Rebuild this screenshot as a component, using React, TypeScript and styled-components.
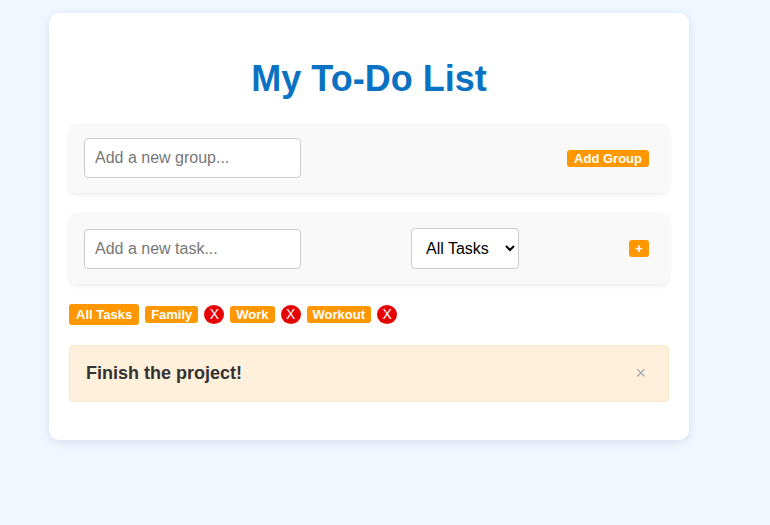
import React, { useState } from 'react';
import styled, { createGlobalStyle } from 'styled-components';

const GlobalStyle = createGlobalStyle`
  body {
    margin: 0;
    background: #f0f7ff;
    font-family: 'Liberation Sans', Arial, sans-serif;
  }
`;

type Task = { id: number; text: string; group: string };

const App = () => {
  const [groups, setGroups] = useState<string[]>(['Family', 'Work', 'Workout']);
  const [tasks, setTasks] = useState<Task[]>([{ id: 1, text: 'Finish the project!', group: 'All Tasks' }]);
  const [filter, setFilter] = useState('All Tasks');

  return (
    <Page>
      <GlobalStyle />
      <Card>
        <Title>My To-Do List</Title>

        <Panel>
          <TextInput placeholder='Add a new group...' />
          <SmallButton>Add Group</SmallButton>
        </Panel>

        <Panel $tall>
          <TextInput placeholder='Add a new task...' />
          <Select value={filter} onChange={(e) => setFilter(e.target.value)}>
            <option>All Tasks</option>
            {groups.map((g) => (
              <option key={g}>{g}</option>
            ))}
          </Select>
          <SmallButton $square>+</SmallButton>
        </Panel>

        <Tags>
          <Tag $active onClick={() => setFilter('All Tasks')}>
            All Tasks
          </Tag>
          {groups.map((g) => (
            <React.Fragment key={g}>
              <Tag onClick={() => setFilter(g)}>{g}</Tag>
              <RemoveButton onClick={() => setGroups(groups.filter((x) => x !== g))}>X</RemoveButton>
            </React.Fragment>
          ))}
        </Tags>

        <TaskList>
          {tasks.map((t) => (
            <TaskItem key={t.id}>
              <TaskText>{t.text}</TaskText>
              <CloseButton onClick={() => setTasks(tasks.filter((x) => x.id !== t.id))}>×</CloseButton>
            </TaskItem>
          ))}
        </TaskList>
      </Card>
    </Page>
  );
};

export default App;

const Page = styled.div`
  min-height: 525px;
  padding-top: 13px;
  padding-left: 49px;
  box-sizing: border-box;
`;

const Card = styled.div`
  width: 640px;
  box-sizing: border-box;
  background: #fff;
  border-radius: 10px;
  padding: 20px 20px 20px;
  box-shadow: 0 2px 10px rgba(0, 40, 100, 0.12);
`;

const Title = styled.h1`
  margin: 25px 0 25px;
  text-align: center;
  font-size: 36px;
  font-weight: bold;
  color: #0a72c2;
  line-height: 41px;
`;

const Panel = styled.div<{ $tall?: boolean }>`
  display: flex;
  align-items: center;
  justify-content: space-between;
  background: #f9f9f9;
  border-radius: 8px;
  padding: ${({ $tall }) => ($tall ? '15px 20px 15px 15px' : '14px 20px 15px 15px')};
  margin-bottom: 20px;
  box-shadow: 0 2px 5px rgba(0, 0, 0, 0.08);
`;

const TextInput = styled.input`
  width: 217px;
  height: 40px;
  box-sizing: border-box;
  padding: 0 10px;
  border: 1px solid #ccc;
  border-radius: 4px;
  font-size: 16px;
  font-family: 'Liberation Sans', Arial, sans-serif;
  background: #fff;
  outline: none;

  &::placeholder {
    color: #777;
  }
`;

const Select = styled.select`
  width: 108px;
  height: 41px;
  padding: 0 6px 0 10px;
  border: 1px solid #ccc;
  border-radius: 4px;
  font-size: 16px;
  font-family: 'Liberation Sans', Arial, sans-serif;
  background: #fff;
  color: #000;
`;

const SmallButton = styled.button<{ $square?: boolean }>`
  background: #ff9800;
  color: #fff;
  border: none;
  border-radius: 3px;
  padding: ${({ $square }) => ($square ? '0' : '0 7px')};
  width: ${({ $square }) => ($square ? '20px' : 'auto')};
  height: 17px;
  font-size: 13px;
  font-weight: bold;
  font-family: 'Liberation Sans', Arial, sans-serif;
  line-height: 17px;
  cursor: pointer;
`;

const Tags = styled.div`
  display: flex;
  align-items: center;
  gap: 6px;
  margin-bottom: 20px;
`;

const Tag = styled.button<{ $active?: boolean }>`
  background: #ff9800;
  color: #fff;
  border: none;
  border-radius: 3px;
  padding: ${({ $active }) => ($active ? '0 7px' : '0 6px')};
  height: ${({ $active }) => ($active ? '21px' : '17px')};
  font-size: 13px;
  font-weight: bold;
  font-family: 'Liberation Sans', Arial, sans-serif;
  line-height: ${({ $active }) => ($active ? '20px' : '17px')};
  cursor: pointer;
`;

const RemoveButton = styled.button`
  width: 20px;
  height: 19px;
  padding: 0;
  border: none;
  border-radius: 50%;
  background: #e60000;
  color: #fff;
  font-size: 14px;
  font-family: 'Liberation Sans', Arial, sans-serif;
  line-height: 19px;
  cursor: pointer;
`;

const TaskList = styled.ul`
  list-style: none;
  margin: 0 0 18px;
  padding: 0;
`;

const TaskItem = styled.li`
  display: flex;
  align-items: center;
  justify-content: space-between;
  height: 57px;
  box-sizing: border-box;
  padding: 0 22px 0 16px;
  background: #fff0dc;
  border: 1px solid #fbe6c8;
  border-radius: 4px;
`;

const TaskText = styled.span`
  font-size: 18px;
  font-weight: bold;
  color: #333;
`;

const CloseButton = styled.button`
  background: none;
  border: none;
  color: #aaa;
  font-size: 18px;
  padding: 0;
  cursor: pointer;
  font-family: 'Liberation Sans', Arial, sans-serif;
`;
